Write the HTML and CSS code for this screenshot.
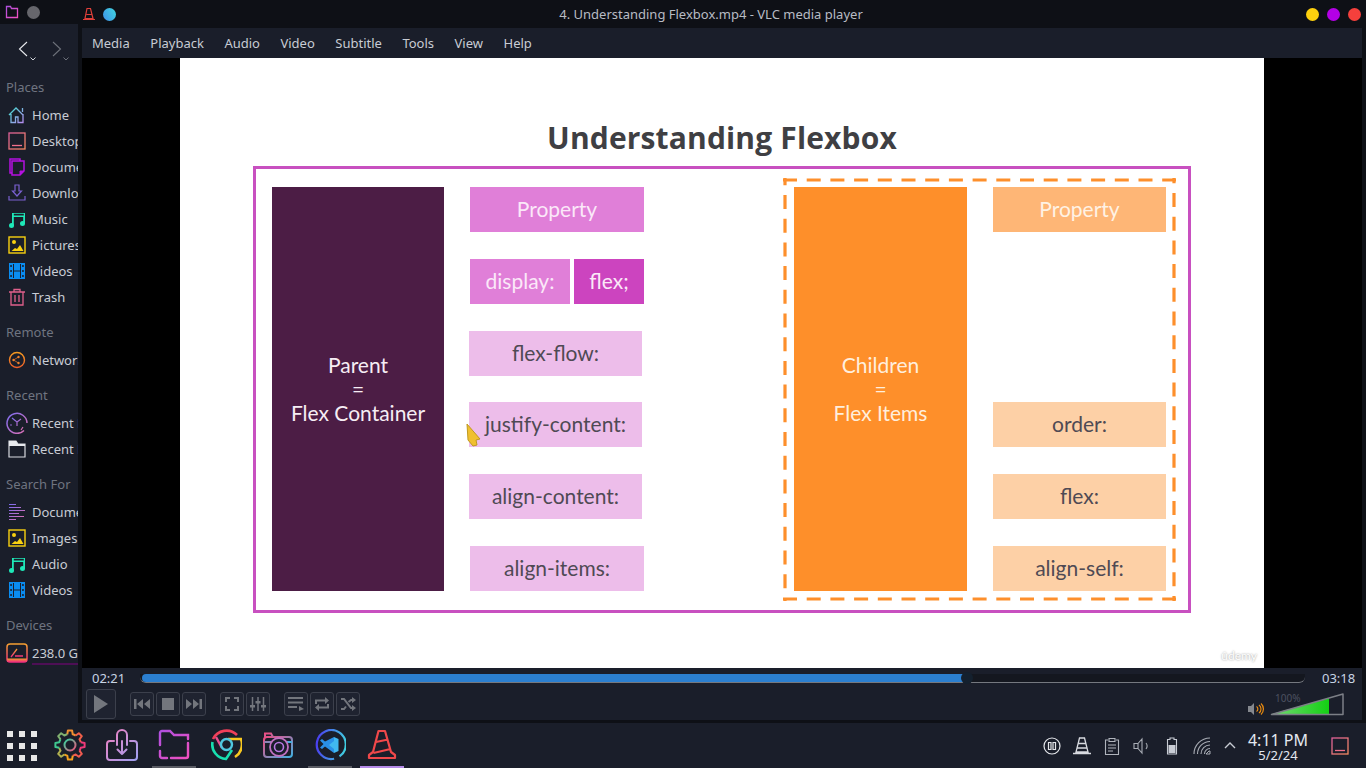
FILE: index.html
```html
<!DOCTYPE html>
<html>
    <head>
        <title>4. Understanding Flexbox.mp4 - VLC media player</title>
        <link rel="stylesheet" href="styles.css">
    </head>
    <body>
        <!-- shared gradients and repeated icons -->
        <svg class="defs" width="0" height="0">
            <defs>
                <linearGradient id="gHome" x1="0" y1="0" x2="1" y2="1"><stop offset="0" stop-color="#3fe0d0"/><stop offset="1" stop-color="#b58cf0"/></linearGradient>
                <linearGradient id="gCoral" x1="0" y1="0" x2="1" y2="1"><stop offset="0" stop-color="#e0609a"/><stop offset="1" stop-color="#f58a60"/></linearGradient>
                <linearGradient id="gOrange" x1="0" y1="0" x2="0" y2="1"><stop offset="0" stop-color="#f59a20"/><stop offset="1" stop-color="#f0602a"/></linearGradient>
                <linearGradient id="gRecent" x1="0" y1="0" x2="1" y2="1"><stop offset="0" stop-color="#7c6cf0"/><stop offset="1" stop-color="#e070b0"/></linearGradient>
                <linearGradient id="gDrive" x1="0" y1="0" x2="0" y2="1"><stop offset="0" stop-color="#f5a030"/><stop offset="1" stop-color="#f02a80"/></linearGradient>
                <linearGradient id="gBox" x1="0" y1="0" x2="1" y2="1" gradientUnits="objectBoundingBox"><stop offset="0" stop-color="#f080c0"/><stop offset="1" stop-color="#a0a0f0"/></linearGradient>
                <linearGradient id="gFolder" x1="0" y1="0" x2="1" y2="1"><stop offset="0" stop-color="#b050e0"/><stop offset="1" stop-color="#f050c0"/></linearGradient>
                <linearGradient id="gCam" x1="0" y1="0" x2="1" y2="1"><stop offset="0" stop-color="#f04a80"/><stop offset="1" stop-color="#40b0e0"/></linearGradient>
                <linearGradient id="gCode" x1="0" y1="0" x2="1" y2="0"><stop offset="0" stop-color="#4a40f0"/><stop offset="1" stop-color="#40d0e0"/></linearGradient>
                <linearGradient id="gVol" x1="0" y1="0" x2="1" y2="0"><stop offset="0" stop-color="#74d874"/><stop offset="1" stop-color="#14d014"/></linearGradient>
                <linearGradient id="gHub" x1="0" y1="0" x2="1" y2="1"><stop offset="0" stop-color="#30d8a0"/><stop offset="1" stop-color="#f0507a"/></linearGradient>
                <path id="tooth" d="M-2.700 -10.700L-2.100 -14.600H2.100L2.700 -10.700A11 11 0 0 1 5.670 -9.430" fill="none" stroke-width="2" stroke-linejoin="round"/>
                <symbol id="icMusic" viewBox="0 0 18 18"><path d="M4 3h13v11h-1.800V7H5.800v9H4zM5.800 3.800v1.800h10V3.800z" fill="#1ee8b8"/><circle cx="3.500" cy="15.500" r="2.500" fill="#1ee8b8"/><circle cx="14.500" cy="13.500" r="2.500" fill="#1ee8b8"/></symbol>
                <symbol id="icPic" viewBox="0 0 18 18"><rect x="1" y="1" width="16" height="16" fill="none" stroke="#f8d010" stroke-width="1.400"/><circle cx="6" cy="6" r="2" fill="#f8d010"/><path d="M3.500 15l3.500-3 2 1 3-4 3.500 6z" fill="#f8d010"/></symbol>
                <symbol id="icFilm" viewBox="0 0 18 18"><path d="M1 1h16v16H1z" fill="#0a8cf0"/><path d="M5 2v14h1V2zM12 2v14h1V2zM6 8.500h6v1H6z" fill="#1a1e2a"/><path d="M2.300 3h1.500v2H2.300zM2.300 8h1.500v2H2.300zM2.300 13h1.500v2H2.300zM14.200 3h1.500v2h-1.500zM14.200 8h1.500v2h-1.500zM14.200 13h1.500v2h-1.500z" fill="#1a1e2a"/></symbol>
            </defs>
        </svg>

        <div class="top">
            <aside class="places">
                <div class="placesBar">
                    <svg width="14" height="14" viewBox="0 0 14 14"><path d="M1.500 12.500V1.500h4l1 2h6v9z" fill="none" stroke="url(#gFolder)" stroke-width="1.300"/></svg>
                    <span class="grayDot"></span>
                </div>
                <div class="nav">
                    <svg width="14" height="18" viewBox="0 0 14 18"><path d="M10 2L2.500 9 10 16" fill="none" stroke="#e8eaee" stroke-width="1.100"/></svg>
                    <svg class="navDown" width="6" height="4" viewBox="0 0 6 4"><path d="M.5.500L3 3 5.500.500" fill="none" stroke="#d0d4da"/></svg>
                    <svg class="navNext" width="14" height="18" viewBox="0 0 14 18"><path d="M3 2l7.500 7L3 16" fill="none" stroke="#6d717a" stroke-width="1.100"/></svg>
                    <svg class="navDown" width="6" height="4" viewBox="0 0 6 4"><path d="M.5.500L3 3 5.500.500" fill="none" stroke="#6d717a"/></svg>
                </div>

                <section class="group">
                    <div class="groupName">Places</div>
                    <div class="place"><svg class="ic" viewBox="0 0 18 18"><path d="M1 9l7-7 7 7M3 8v8.500h4.500V11h2.500v5.500h5V8M14.500 2v4" fill="none" stroke="url(#gHome)" stroke-width="1.300"/></svg>Home</div>
                    <div class="place"><svg class="ic" viewBox="0 0 18 18"><rect x="1" y="1" width="16" height="16" fill="none" stroke="url(#gCoral)" stroke-width="1.300"/><path d="M4 13.500h10" stroke="#f0708a" stroke-width="1.300"/></svg>Desktop</div>
                    <div class="place"><svg class="ic" viewBox="0 0 18 18"><path d="M2 1h10v2h4v10l-4 4H4v-2H2zM4 15V3h8" fill="none" stroke="#b410e0" stroke-width="1.500"/><path d="M12 17v-4h4" fill="#b410e0" stroke="#b410e0"/></svg>Documents</div>
                    <div class="place"><svg class="ic" viewBox="0 0 18 18"><path d="M7 1h4v6h2.500L9 12 4.500 7H7zM1 12v4h16v-4" fill="none" stroke="#7a60d0" stroke-width="1.200"/></svg>Downloads</div>
                    <div class="place"><svg class="ic"><use href="#icMusic"/></svg>Music</div>
                    <div class="place"><svg class="ic"><use href="#icPic"/></svg>Pictures</div>
                    <div class="place"><svg class="ic"><use href="#icFilm"/></svg>Videos</div>
                    <div class="place"><svg class="ic" viewBox="0 0 18 18"><path d="M1 4h16M6 4V1.500h6V4M3 4v13h12V4M7 7v7M11 7v7" fill="none" stroke="#e0608c" stroke-width="1.300"/></svg>Trash</div>
                </section>
                <section class="group">
                    <div class="groupName">Remote</div>
                    <div class="place"><svg class="ic" viewBox="0 0 18 18"><circle cx="9" cy="9" r="7.500" fill="none" stroke="url(#gOrange)" stroke-width="1.400"/><circle cx="5.500" cy="9" r="1.200" fill="#f0802a"/><circle cx="10.500" cy="6" r="1.200" fill="#f0802a"/><circle cx="10.500" cy="12" r="1.200" fill="#f0802a"/><path d="M5.500 9l5-3M5.500 9l5 3" stroke="#f0802a" stroke-width=".7"/></svg>Network</div>
                </section>
                <section class="group">
                    <div class="groupName">Recent</div>
                    <div class="place"><svg class="ic icBig" viewBox="0 0 22 22"><path d="M18 18.500A10 10 0 1 1 21 11" fill="none" stroke="url(#gRecent)" stroke-width="1.500"/><path d="M6 6l5 4 4-3M11 10v4M17 15l-2 3" fill="none" stroke="url(#gRecent)" stroke-width="1.200"/><circle cx="5" cy="13" r=".8" fill="#a070e0"/></svg>Recent Files</div>
                    <div class="place"><svg class="ic" viewBox="0 0 18 18"><path d="M1 1h7l2 3h7v13H1z" fill="none" stroke="#d8dae0" stroke-width="1.200"/><path d="M1 1h7l2 3h7v2H1z" fill="#e8eaee"/></svg>Recent Locations</div>
                </section>
                <section class="group">
                    <div class="groupName">Search For</div>
                    <div class="place"><svg class="ic" viewBox="0 0 18 18"><path d="M1 1.500h7M1 4.500h12M1 7.500h16M1 10.500h10M1 13.500h15M1 16.500h7" fill="none" stroke="url(#gRecent)" stroke-width="1.200"/></svg>Documents</div>
                    <div class="place"><svg class="ic"><use href="#icPic"/></svg>Images</div>
                    <div class="place"><svg class="ic"><use href="#icMusic"/></svg>Audio</div>
                    <div class="place"><svg class="ic"><use href="#icFilm"/></svg>Videos</div>
                </section>
                <section class="group">
                    <div class="groupName">Devices</div>
                    <div class="place"><svg class="ic icBig" viewBox="0 0 22 20"><rect x="1" y="1" width="20" height="18" rx="3" fill="none" stroke="url(#gDrive)" stroke-width="1.500"/><path d="M5 14l6-8M9 13h8" fill="none" stroke="url(#gDrive)" stroke-width="1.300"/><path d="M1 15.500h20V19H1z" fill="url(#gDrive)"/></svg><span class="drive">238.0 GiB Internal Drive</span></div>
                </section>
            </aside>

            <main class="player">
                <div class="titleBar">
                    <svg class="cone" width="14" height="14" viewBox="0 0 14 14"><path d="M5 1.500h3.500l2.500 10H3zM4.500 7.500h5M1 12.500h12" fill="none" stroke="#e0403a" stroke-width="1.200"/></svg>
                    <span class="blueDot"></span>
                    <div class="title">4. Understanding Flexbox.mp4 - VLC media player</div>
                    <div class="winBtns">
                        <span class="winBtn yellow"></span>
                        <span class="winBtn purple"></span>
                        <span class="winBtn red"></span>
                    </div>
                </div>
                <nav class="menu">
                    <span>Media</span><span>Playback</span><span>Audio</span><span>Video</span><span>Subtitle</span><span>Tools</span><span>View</span><span>Help</span>
                </nav>

                <div class="video">
                    <div class="slide">
                        <h1>Understanding Flexbox</h1>
                        <div class="frame">
                            <div class="bigBox parent">
                                <div>Parent</div>
                                <div>=</div>
                                <div>Flex Container</div>
                            </div>
                            <div class="props">
                                <div class="prop pink">Property</div>
                                <div class="propPair">
                                    <div class="prop pink">display:</div>
                                    <div class="prop strong">flex;</div>
                                </div>
                                <div class="prop light shifted">flex-flow:</div>
                                <div class="prop light shifted">justify-content:</div>
                                <div class="prop light shifted">align-content:</div>
                                <div class="prop light">align-items:</div>
                            </div>
                            <div class="dashed">
                                <svg class="dashLine" width="394" height="423" fill="none" stroke="#fd8f2c" stroke-width="3.200" stroke-dasharray="14 9.700">
                                    <path d="M0 2H393"/>
                                    <path d="M0 421H393"/>
                                    <path d="M2 0V423" stroke-dashoffset="6.700"/>
                                    <path d="M391 0V423" stroke-dashoffset="8.700"/>
                                </svg>
                                <div class="bigBox children">
                                    <div>Children</div>
                                    <div>=</div>
                                    <div>Flex Items</div>
                                </div>
                                <div class="props propsRight">
                                    <div class="prop peach">Property</div>
                                    <div class="prop"></div>
                                    <div class="prop"></div>
                                    <div class="prop pale">order:</div>
                                    <div class="prop pale">flex:</div>
                                    <div class="prop pale">align-self:</div>
                                </div>
                            </div>
                        </div>
                        <span class="watermark">ûdemy</span>
                        <svg class="cursor" width="16" height="24" viewBox="0 0 16 24"><path d="M1 1l13 15-4 1 1 5-4 1-5-6z" fill="#f0c030" stroke="#c09a20"/></svg>
                    </div>
                </div>

                <div class="seekRow">
                    <span class="time">02:21</span>
                    <div class="track">
                        <div class="played"></div>
                        <span class="knob"></span>
                    </div>
                    <span class="time timeEnd">03:18</span>
                </div>
                <div class="controls">
                    <button class="btn play"><svg width="16" height="18" viewBox="0 0 16 18"><path d="M1 0l14 9-14 9z" fill="#73767d"/></svg></button>
                    <div class="btnGroup">
                        <button class="btn"><svg width="16" height="10" viewBox="0 0 16 10"><path d="M0 0h2.500v10H0zM9 0v10L3 5zM16 0v10l-6-5z" fill="#73767d"/></svg></button>
                        <button class="btn"><svg width="12" height="12" viewBox="0 0 12 12"><path d="M0 0h12v12H0z" fill="#73767d"/></svg></button>
                        <button class="btn"><svg width="16" height="10" viewBox="0 0 16 10"><path d="M13.500 0H16v10h-2.500zM7 0v10l6-5zM0 0v10l6-5z" fill="#73767d"/></svg></button>
                    </div>
                    <div class="btnGroup">
                        <button class="btn"><svg width="14" height="14" viewBox="0 0 14 14"><path d="M1 5V1h4M9 1h4v4M13 9v4H9M5 13H1V9" fill="none" stroke="#73767d" stroke-width="2"/></svg></button>
                        <button class="btn"><svg width="16" height="14" viewBox="0 0 16 14"><path d="M2.500 0v14M8 0v14M13.500 0v14" stroke="#73767d" stroke-width="1.500"/><path d="M0 8h5v2.500H0zM5.500 4h5v2.500h-5zM11 8h5v2.500h-5z" fill="#73767d"/></svg></button>
                    </div>
                    <div class="btnGroup">
                        <button class="btn"><svg width="16" height="14" viewBox="0 0 16 14"><path d="M0 1h15M0 5.500h15M0 10h9" stroke="#73767d" stroke-width="2"/><path d="M11 9l5 3-5 2z" fill="#73767d"/></svg></button>
                        <button class="btn"><svg width="16" height="14" viewBox="0 0 16 14"><path d="M2 7V3.500h10M14 7v3.500H4" fill="none" stroke="#73767d" stroke-width="2"/><path d="M11 0l4 3.500L11 7zM5 7L1 10.500 5 14z" fill="#73767d"/></svg></button>
                        <button class="btn"><svg width="16" height="14" viewBox="0 0 16 14"><path d="M1 2h3l7 9h2M1 12h3l2-2.500M8.500 5L11 3h2" fill="none" stroke="#73767d" stroke-width="2"/><path d="M12 0l4 3-4 3zM12 8l4 3-4 3z" fill="#73767d"/></svg></button>
                    </div>
                    <div class="volume">
                        <svg width="16" height="14" viewBox="0 0 16 14"><path d="M0 4h3l3-3v12l-3-3H0z" fill="#85888e"/><path d="M8.500 4.500a3 3 0 0 1 0 5M11 3a5 5 0 0 1 0 8M13 1.500a7.500 7.500 0 0 1 0 11" fill="none" stroke="#e88a10" stroke-width="1.200"/></svg>
                        <svg class="volBar" width="74" height="23" viewBox="0 0 74 23">
                            <path d="M2 21L59 5v16z" fill="url(#gVol)"/>
                            <path d="M1.500 21.500L73 1v20.500z" fill="none" stroke="#7c7f86" stroke-width="1.500" stroke-linejoin="round"/>
                            <text class="volText" x="5" y="9">100%</text>
                        </svg>
                    </div>
                </div>
            </main>
        </div>

        <footer class="taskbar">
            <div class="launcher">
                <div class="appGrid">
                    <i></i><i></i><i></i><i></i><i></i><i></i><i></i><i></i><i></i>
                </div>
                <div class="task"><svg width="32" height="32" viewBox="0 0 32 32">
                    <g transform="translate(16 16)">
                        <use href="#tooth" stroke="#f09030"/>
                        <use href="#tooth" stroke="#f0604a" transform="rotate(45)"/>
                        <use href="#tooth" stroke="#f03a7a" transform="rotate(90)"/>
                        <use href="#tooth" stroke="#f05a50" transform="rotate(135)"/>
                        <use href="#tooth" stroke="#f5a020" transform="rotate(180)"/>
                        <use href="#tooth" stroke="#b0b050" transform="rotate(225)"/>
                        <use href="#tooth" stroke="#40c890" transform="rotate(270)"/>
                        <use href="#tooth" stroke="#80b070" transform="rotate(315)"/>
                    </g>
                    <circle cx="16" cy="16" r="5.500" fill="none" stroke="url(#gHub)" stroke-width="2"/>
                </svg></div>
                <div class="task"><svg width="32" height="32" viewBox="0 0 32 32"><path d="M8 12H4a3 3 0 0 0-3 3v13a3 3 0 0 0 3 3h24a3 3 0 0 0 3-3V15a3 3 0 0 0-3-3h-4M11 16V6a5 5 0 0 1 10 0v10M16 12v13M11.500 20.500L16 25l4.500-4.500" fill="none" stroke="url(#gBox)" stroke-width="2" stroke-linecap="round" stroke-linejoin="round"/></svg></div>
                <div class="task current"><svg width="32" height="32" viewBox="0 0 32 32"><path d="M2 16V4a2 2 0 0 1 2-2h8l4 4h14v4M30 14v13a2 2 0 0 1-2 2H13M9 29H4a2 2 0 0 1-2-2v-5" fill="none" stroke="url(#gFolder)" stroke-width="2.400" stroke-linecap="round"/></svg></div>
                <div class="task"><svg width="32" height="32" viewBox="0 0 32 32">
                    <path d="M3 10A15 15 0 0 1 27 6" fill="none" stroke="#f0405a" stroke-width="2.600"/>
                    <path d="M2.500 13A14.500 14.500 0 0 0 16 30l6-9" fill="none" stroke="#18e0b0" stroke-width="2.600"/>
                    <path d="M18 10h13a15 15 0 0 1-6 18" fill="none" stroke="#f8c820" stroke-width="2.600"/>
                    <path d="M6 8l6 11" fill="none" stroke="#e85090" stroke-width="2.400"/>
                    <circle cx="16.500" cy="15.500" r="5.500" fill="none" stroke="#50c8e0" stroke-width="2.400"/>
                </svg></div>
                <div class="task"><svg width="32" height="32" viewBox="0 0 32 32"><rect x="2" y="8" width="28" height="20" rx="3" fill="none" stroke="url(#gCam)" stroke-width="2"/><path d="M3 8V4.500h6L11 8M2 13h8M24 13h6" fill="none" stroke="url(#gCam)" stroke-width="2"/><circle cx="17" cy="18" r="9" fill="#1a1e2a" stroke="#c070c0" stroke-width="1.800"/><circle cx="17" cy="18" r="4.500" fill="none" stroke="#b878e0" stroke-width="1.600"/></svg></div>
                <div class="task current"><svg width="32" height="32" viewBox="0 0 32 32"><path d="M27 26A14.500 14.500 0 1 0 22 29" fill="none" stroke="url(#gCode)" stroke-width="2.200" transform="rotate(8 16 16)"/><path d="M20 8v16l-9-6.500-3 2.500-2-1.500 3.500-3.500L6 11.500 8 10l3 2.500z" fill="#2a90e8"/><path d="M20 8l4.500 2v12L20 24zM20 12l-5 4 5 4z" fill="#40b8f0"/></svg></div>
                <div class="task active"><svg width="32" height="32" viewBox="0 0 32 32"><path d="M12.500 2h6.500l6 21 4 3v3H3v-3l4-3zM10 13l12-2.500M7.500 24l17-4" fill="none" stroke="#f0484a" stroke-width="2.200" stroke-linejoin="round"/></svg></div>
            </div>
            <div class="tray">
                <svg class="trayIc" width="18" height="18" viewBox="0 0 18 18"><circle cx="9" cy="9" r="8" fill="none" stroke="#e4e6ea" stroke-width="1.200"/><path d="M5.500 5.500h2.500v7H5.500zM10 5.500h2.500v7H10z" fill="none" stroke="#e4e6ea" stroke-width="1.200"/></svg>
                <svg class="trayIc" width="18" height="18" viewBox="0 0 18 18"><path d="M6.500 1h5l3.500 14H3zM5 6.500h8M4 11h10M0 16.500h18" fill="none" stroke="#d8dae0" stroke-width="1.300"/></svg>
                <svg class="trayIc" width="18" height="18" viewBox="0 0 18 18"><path d="M5 3H2.500v14.500h13V3H13M6 1.500h6v3H6zM5 8h8M5 11h8M5 14h5" fill="none" stroke="#b0b4bc" stroke-width="1.100"/></svg>
                <svg class="trayIc" width="18" height="18" viewBox="0 0 18 18"><path d="M1 6.500h4v5H1zM5 6.500L9 2v14l-4-4.500M13 6a5 5 0 0 1 0 6" fill="none" stroke="#a8acb4" stroke-width="1.100"/></svg>
                <svg class="trayIc" width="18" height="18" viewBox="0 0 18 18"><path d="M7 1h4v1.500h2.500V17h-9V2.500H7z" fill="none" stroke="#c8ccd4" stroke-width="1.100"/><path d="M5.500 8h7v8h-7z" fill="#c8ccd4"/></svg>
                <svg class="trayIc wifi" width="18" height="18" viewBox="0 0 18 18"><path d="M1 17A16 16 0 0 1 17 1M4.500 17A12.500 12.500 0 0 1 17 4.500M8 17a9 9 0 0 1 9-9M11.500 17a5.500 5.500 0 0 1 5.500-5.500" fill="none" stroke="#a8acb4" stroke-width="1.100"/><path d="M13 17l3-3h1v3z" fill="none" stroke="#a8acb4"/></svg>
                <svg class="chevron" width="12" height="7" viewBox="0 0 12 7"><path d="M1 6l5-5 5 5" fill="none" stroke="#c8ccd4" stroke-width="1.400"/></svg>
                <div class="clock">
                    <div class="clockTime">4:11 PM</div>
                    <div class="clockDate">5/2/24</div>
                </div>
                <svg width="18" height="18" viewBox="0 0 18 18"><rect x="1" y="1" width="16" height="16" fill="none" stroke="url(#gCoral)" stroke-width="1.300"/><path d="M4 13.500h10" stroke="#f0708a" stroke-width="1.300"/></svg>
            </div>
        </footer>
    </body>
</html>
```

FILE: styles.css
```css
body{
    margin: 0;
    width: 1366px;
    height: 768px;
    overflow: hidden;
    background-color: #1a1e2a;
    color: #c8ccd4;
    font-family: "Noto Sans", sans-serif;
    font-size: 13px;
}

.defs{
    display: block;
    height: 0;
}

.top{
    display: flex;
    height: 723px;
}

/* file manager behind the player */
.places{
    width: 78px;
    flex-shrink: 0;
    overflow: hidden;
    white-space: nowrap;
}

.placesBar{
    display: flex;
    align-items: center;
    gap: 8px;
    height: 24px;
    padding-left: 5px;
    background-color: #0e1016;
}

.grayDot{
    width: 13px;
    height: 13px;
    border-radius: 50%;
    background-color: #66666c;
}

.nav{
    display: flex;
    align-items: center;
    height: 50px;
    padding-left: 17px;
}

.navDown{
    margin: 20px 0 0 -1px;
}

.navNext{
    margin-left: 14px;
}

.group{
    margin-bottom: 9px;
}

.groupName{
    height: 26px;
    margin-bottom: 2px;
    padding-left: 6px;
    line-height: 26px;
    color: #6f7480;
}

.place{
    display: flex;
    align-items: center;
    height: 26px;
    padding-left: 8px;
}

.ic{
    width: 18px;
    height: 18px;
    flex-shrink: 0;
    margin-right: 6px;
}

.icBig{
    width: 22px;
    height: 22px;
    margin: 0 4px 0 -2px;
}

.drive{
    margin-top: 2px;
    border-bottom: 2px solid #4d0f55;
    line-height: 20px;
}

/* vlc window */
.player{
    width: 1288px;
    background-color: #0e1016;
}

.titleBar{
    display: flex;
    align-items: center;
    height: 28px;
    padding-left: 4px;
}

.blueDot{
    width: 13px;
    height: 13px;
    margin-left: 7px;
    border-radius: 50%;
    background-image: linear-gradient(60deg, #3f8fe8, #40d8e0);
}

.title{
    flex: 1;
    text-align: center;
    color: #b8bcc4;
}

.winBtns{
    display: flex;
    gap: 8px;
    padding-right: 5px;
}

.winBtn{
    width: 13px;
    height: 13px;
    border-radius: 50%;
}

.yellow{
    background-color: #fdd00e;
}

.purple{
    background-color: #b400e6;
}

.red{
    background-color: #f5403c;
}

.menu{
    display: flex;
    align-items: center;
    height: 30px;
    margin: 0 4px;
    background-color: #1a1e2a;
}

.menu span{
    padding: 0 10.5px 0 10px;
}

.video{
    display: flex;
    justify-content: center;
    height: 610px;
    margin: 0 4px;
    background-color: #000;
}

.slide{
    position: relative;
    width: 1084px;
    display: flex;
    flex-direction: column;
    align-items: center;
    background-color: #fff;
    font-family: Lato, sans-serif;
    font-size: 21px;
}

.slide h1{
    margin: 0;
    height: 108px;
    box-sizing: border-box;
    padding-top: 60px;
    font-family: "Open Sans", sans-serif;
    font-size: 30px;
    line-height: 40px;
    letter-spacing: .15px;
    color: #3f3f43;
}

.frame{
    display: flex;
    align-items: center;
    gap: 26px;
    width: 938px;
    height: 447px;
    box-sizing: border-box;
    padding: 0 0 1px 16px;
    border: 3px solid #c850c0;
}

.bigBox{
    display: flex;
    flex-direction: column;
    justify-content: center;
    width: 172px;
    height: 404px;
    flex-shrink: 0;
    text-align: center;
    line-height: 24px;
    color: #f6edf4;
}

.parent{
    background-color: #4c1d45;
}

.children{
    width: 173px;
    background-color: #fe8f2a;
    color: #ffeedd;
}

.props{
    display: flex;
    flex-direction: column;
    gap: 26.8px;
    width: 174px;
    flex-shrink: 0;
}

.propsRight{
    width: 173px;
}

.prop{
    height: 45px;
    line-height: 44px;
    text-align: center;
}

.propPair{
    display: flex;
    gap: 4px;
}

.propPair .pink{
    flex: 1;
}

.propPair .strong{
    flex: 0 0 70px;
}

.pink{
    background-color: #e07fd8;
    color: #fbe8f8;
}

.strong{
    background-color: #cc44bf;
    color: #fbe8f8;
}

.light{
    background-color: #edbdea;
    color: #4f4a54;
}

.shifted{
    width: 173px;
    margin-left: -1px;
}

.peach{
    background-color: #feb676;
    color: #fff2e4;
}

.pale{
    background-color: #fdd0a6;
    color: #4f4a54;
}

.dashed{
    position: relative;
    display: flex;
    align-items: center;
    gap: 26px;
    width: 392px;
    height: 421px;
    margin-left: 114px;
    padding-left: 10px;
    box-sizing: border-box;
}

.dashLine{
    position: absolute;
    left: -1px;
    top: -1px;
}

.watermark{
    position: absolute;
    right: 7px;
    bottom: 5px;
    font-size: 12px;
    color: #fff;
    text-shadow: 0 0 2px #888;
}

.cursor{
    position: absolute;
    left: 286px;
    top: 365px;
}

/* seek bar and buttons */
.seekRow{
    display: flex;
    align-items: center;
    height: 20px;
    margin: 0 4px;
    padding-left: 10px;
    background-color: #1a1e2a;
}

.time{
    width: 48px;
    flex-shrink: 0;
    color: #c8d4e4;
}

.timeEnd{
    margin-left: 17px;
    width: 40px;
}

.track{
    position: relative;
    width: 1165px;
    flex-shrink: 0;
    height: 9px;
    box-sizing: border-box;
    border-bottom: 1px solid #75787f;
    border-radius: 0 0 6px 6px;
    background-color: #14171f;
}

.played{
    width: 825px;
    height: 8px;
    margin-left: 2px;
    border-radius: 4px 0 0 4px;
    background-color: #2b7fd0;
}

.knob{
    position: absolute;
    left: 821px;
    top: -2px;
    width: 12px;
    height: 12px;
    border-radius: 50%;
    background-color: #14202e;
}

.controls{
    display: flex;
    align-items: center;
    gap: 14px;
    height: 32px;
    margin: 0 4px;
    padding-left: 4px;
    background-color: #1a1e2a;
}

.btnGroup{
    display: flex;
    gap: 2px;
}

.btn{
    display: flex;
    align-items: center;
    justify-content: center;
    width: 24px;
    height: 24px;
    padding: 0;
    border: 1px solid #3c404c;
    border-radius: 3px;
    background-color: #1f2330;
}

.play{
    width: 30px;
    height: 30px;
}

.volume{
    display: flex;
    align-items: flex-end;
    gap: 6px;
    margin-left: auto;
    padding-right: 18px;
}

.volText{
    font-family: "Noto Sans", sans-serif;
    font-size: 10px;
    fill: #4c5160;
}

/* panel */
.taskbar{
    display: flex;
    align-items: center;
    justify-content: space-between;
    height: 45px;
}

.launcher{
    display: flex;
    align-items: center;
}

.appGrid{
    display: grid;
    grid-template-columns: repeat(3, 6px);
    gap: 6px;
    width: 30px;
    padding: 0 7px;
}

.appGrid i{
    width: 6px;
    height: 6px;
    background-color: #e8e8e8;
}

.task{
    display: flex;
    align-items: center;
    justify-content: center;
    width: 44px;
    height: 45px;
    margin: 0 4px;
    box-sizing: border-box;
    border-bottom: 2px solid transparent;
}

.current{
    border-bottom-color: #5a5c64;
}

.active{
    border-bottom-color: #b48ae8;
}

.tray{
    display: flex;
    align-items: center;
    padding-right: 17px;
}

.trayIc{
    margin-right: 12px;
}

.wifi{
    margin-right: 13px;
}

.chevron{
    margin-right: 4px;
}

.clock{
    width: 76px;
    margin-right: 15px;
    padding-top: 1px;
    text-align: center;
    color: #e4e8f0;
}

.clockTime{
    font-size: 16px;
    line-height: 18px;
}

.clockDate{
    font-size: 13px;
    line-height: 13px;
}
```
